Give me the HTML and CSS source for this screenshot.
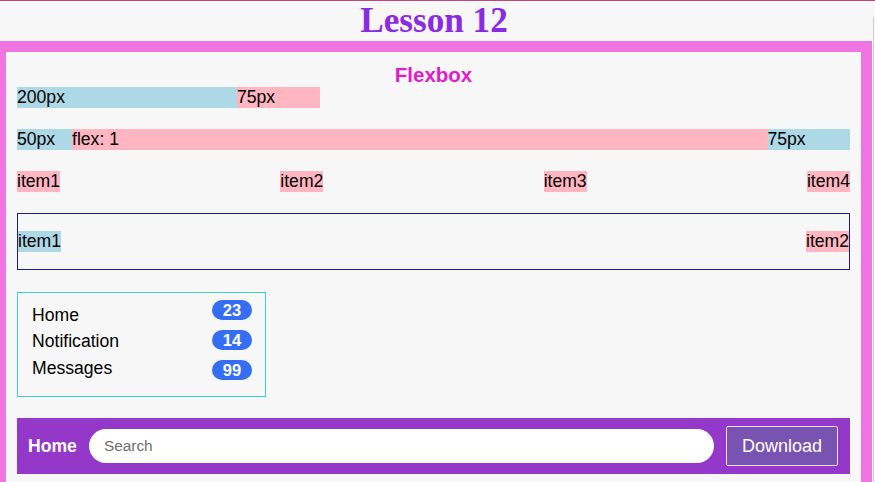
FILE: index.html
```html
<!DOCTYPE html>
<html lang="en">
<head>
<meta charset="utf-8">
<title>Lesson 12</title>
<link rel="stylesheet" href="styles.css">
</head>
<body>
<h1 class="title">Lesson 12</h1>
<main class="frame">
  <h2 class="subtitle">Flexbox</h2>
  <div class="row">
    <div class="blue w200">200px</div>
    <div class="pink w75">75px</div>
  </div>
  <div class="row">
    <div class="blue w50">50px</div>
    <div class="pink grow">flex: 1</div>
    <div class="blue w75">75px</div>
  </div>
  <div class="row between">
    <div class="pink">item1</div>
    <div class="pink">item2</div>
    <div class="pink">item3</div>
    <div class="pink">item4</div>
  </div>
  <div class="row between box">
    <div class="blue">item1</div>
    <div class="pink">item2</div>
  </div>
  <div class="menu">
    <div class="labels">
      <span>Home</span>
      <span>Notification</span>
      <span>Messages</span>
    </div>
    <div class="badges">
      <span class="badge">23</span>
      <span class="badge">14</span>
      <span class="badge">99</span>
    </div>
  </div>
  <nav class="navbar">
    <a class="brand" href="#">Home</a>
    <input class="search" type="text" placeholder="Search">
    <button class="download" type="button">Download</button>
  </nav>
</main>
</body>
</html>
```

FILE: styles.css
```css
* { box-sizing: border-box; }
html, body { margin: 0; padding: 0; }
body {
  background: #f7f7f7;
  border-top: 1px solid #c2477c;
  font-family: "Liberation Sans", Arial, sans-serif;
  font-size: 17.6px;
  color: #000;
  overflow: hidden;
}
body::after {
  content: "";
  position: fixed;
  top: 17px;
  right: 1px;
  width: 1px;
  height: 100%;
  background: #cfcfcf;
}
.title {
  margin: 0;
  padding-right: 7px;
  font-family: "Liberation Serif", "Times New Roman", serif;
  font-size: 35.2px;
  font-weight: bold;
  line-height: 40px;
  text-align: center;
  color: #8a2be2;
}
.frame {
  margin-right: 3px;
  border-style: solid;
  border-color: #ef76e2;
  border-width: 11px 11px 11px 6px;
  padding: 11px;
  display: flex;
  flex-direction: column;
}
.subtitle {
  margin: 0;
  font-size: 20.5px;
  font-weight: bold;
  line-height: 24px;
  text-align: center;
  color: #e21cca;
}
.row {
  display: flex;
  line-height: 20.5px;
  margin-bottom: 21.5px;
}
.blue { background: #add8e6; }
.pink { background: #ffb6c1; }
.w200 { width: 220px; }
.w75 { width: 82.5px; }
.w50 { width: 55px; }
.grow { flex: 1; }
.between { justify-content: space-between; }
.box {
  height: 57px;
  border: 1px solid #1f1d78;
  align-items: center;
}
.menu {
  width: 249px;
  border-width: 1px;
  border-style: solid;
  border-color: #3fcfc9;
  padding: 7px 13px 16px 14px;
  display: flex;
  justify-content: space-between;
  margin-bottom: 21.5px;
}
.labels {
  display: flex;
  flex-direction: column;
  gap: 6.3px;
  padding-top: 5px;
  line-height: 20.2px;
}
.badges {
  display: flex;
  flex-direction: column;
  gap: 10px;
}
.badge {
  width: 40px;
  height: 20px;
  border-radius: 10px;
  background: #356ef3;
  color: #fff;
  font-weight: bold;
  font-size: 16.5px;
  line-height: 20px;
  text-align: center;
}
.navbar {
  height: 56px;
  background: #9338c8;
  display: flex;
  align-items: center;
  gap: 12px;
  padding: 0 12px 0 11px;
}
.brand {
  color: #fff;
  font-weight: bold;
  text-decoration: none;
}
.search {
  flex: 1;
  height: 34px;
  border: none;
  border-radius: 17px;
  background: #fff;
  padding: 0 15px;
  font-family: "Liberation Sans", Arial, sans-serif;
  font-size: 15.4px;
  outline: none;
}
.search::placeholder { color: #6f6f6f; }
.download {
  width: 112px;
  height: 40px;
  background: #7953b2;
  border: 1px solid #eadcf7;
  border-radius: 2px;
  color: #fff;
  font-family: "Liberation Sans", Arial, sans-serif;
  font-size: 18px;
  padding: 0;
}
```
